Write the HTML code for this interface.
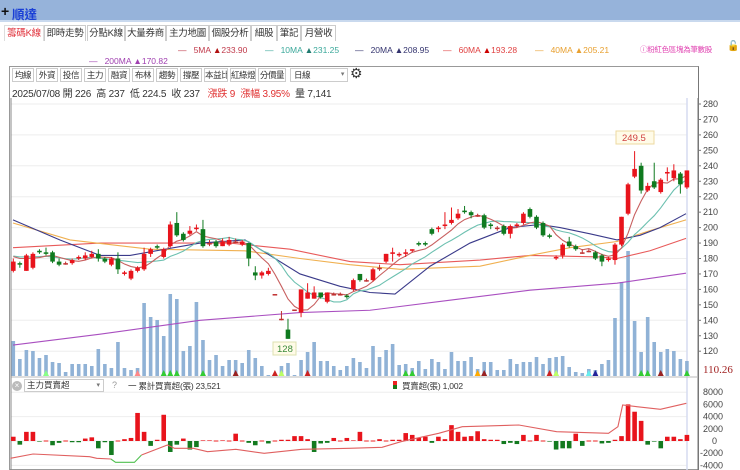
<!DOCTYPE html>
<html><head><meta charset="utf-8">
<style>
*{margin:0;padding:0;box-sizing:border-box}
body{width:740px;height:470px;overflow:hidden;background:#fff;font-family:"Liberation Sans","Noto Sans CJK TC",sans-serif;position:relative;color:#333}
.abs{position:absolute;white-space:nowrap}
#title{left:0;top:0;width:740px;height:22px;background:#96b3da;border-bottom:2px solid #c9d9ee}
.tab{position:absolute;top:25px;height:16px;border:1px solid #ccc;border-bottom:none;font-size:9.5px;line-height:15px;text-align:center;background:#fff;color:#333;white-space:nowrap;overflow:hidden;letter-spacing:-0.3px}
.leg{font-size:8.5px;top:45px}
.tb{position:absolute;top:68px;height:14px;border:1px solid #ccc;font-size:8.5px;line-height:12px;text-align:center;background:#fff;white-space:nowrap;overflow:hidden;letter-spacing:-0.4px}
</style></head><body>
<div id="title" class="abs"></div>
<div class="abs" style="left:1px;top:3px;font-size:14px;font-weight:bold;color:#111">+</div>
<div class="abs" style="left:12px;top:4px;font-size:12.5px;font-weight:bold;color:#1a3fd6">順達</div>

<div class="tab" style="left:4px;width:40px;color:#e0303a;border-color:#ddd">籌碼K線</div>
<div class="tab" style="left:44px;width:42px">即時走勢</div>
<div class="tab" style="left:87px;width:38px">分點K線</div>
<div class="tab" style="left:125px;width:41px">大量券商</div>
<div class="tab" style="left:166px;width:43px">主力地圖</div>
<div class="tab" style="left:209px;width:42px">個股分析</div>
<div class="tab" style="left:251px;width:26px">細股</div>
<div class="tab" style="left:277px;width:24px">筆記</div>
<div class="tab" style="left:301px;width:35px">月營收</div>

<div class="abs leg" style="left:178px;color:#c0394a">—&nbsp;&nbsp;&nbsp;5MA <span style="color:#b01010">▲</span>233.90</div>
<div class="abs leg" style="left:265px;color:#3aa89a">—&nbsp;&nbsp;&nbsp;10MA <span style="color:#207a70">▲</span>231.25</div>
<div class="abs leg" style="left:355px;color:#33336e">—&nbsp;&nbsp;&nbsp;20MA <span>▲</span>208.95</div>
<div class="abs leg" style="left:443px;color:#e04040">—&nbsp;&nbsp;&nbsp;60MA <span style="color:#c00">▲</span>193.28</div>
<div class="abs leg" style="left:535px;color:#e8a030">—&nbsp;&nbsp;&nbsp;40MA <span>▲</span>205.21</div>
<div class="abs leg" style="left:640px;top:44px;color:#e040b0;font-size:7.5px;letter-spacing:-0.3px">ⓘ粉紅色區塊為筆數股</div>
<div class="abs" style="left:727px;top:41px;font-size:10px;color:#000">🔓</div>
<div class="abs leg" style="left:89px;top:56px;color:#a040b0">—&nbsp;&nbsp;&nbsp;200MA <span>▲</span>170.82</div>

<div class="abs" style="left:9px;top:66px;width:690px;height:404px;border:1px solid #999;border-right:1px solid #777"></div>
<div class="tb" style="left:12px;width:22px">均線</div>
<div class="tb" style="left:36px;width:22px">外資</div>
<div class="tb" style="left:60px;width:22px">投信</div>
<div class="tb" style="left:84px;width:22px">主力</div>
<div class="tb" style="left:108px;width:22px">融資</div>
<div class="tb" style="left:132px;width:22px">布林</div>
<div class="tb" style="left:156px;width:22px">趨勢</div>
<div class="tb" style="left:180px;width:22px">撐壓</div>
<div class="tb" style="left:204px;width:24px">本益比</div>
<div class="tb" style="left:230px;width:26px">紅綠燈</div>
<div class="tb" style="left:258px;width:28px">分價量</div>
<div class="tb" style="left:290px;width:58px;text-align:left;padding-left:3px">日線<span style="position:absolute;right:3px;font-size:7px;color:#777">▾</span></div>
<div class="abs" style="left:350px;top:65px;font-size:14px;color:#333">⚙</div>
<div class="abs" style="left:12px;top:85px;font-size:10px;letter-spacing:-0.2px;color:#333">2025/07/08 開 226 &nbsp;高 237 &nbsp;低 224.5 &nbsp;收 237 &nbsp;&nbsp;<span style="color:#e03030">漲跌 9 &nbsp;漲幅 3.95%</span> &nbsp;量 7,141</div>

<svg id="c" class="abs" style="left:0;top:0" width="740" height="470"></svg>

<div class="abs" style="left:12px;top:381px;width:10px;height:10px;border-radius:5px;background:#bbb;color:#fff;font-size:8px;line-height:10px;text-align:center">×</div>
<div class="abs" style="left:24px;top:379px;width:80px;height:13px;border:1px solid #ccc;font-size:8.5px;line-height:11px;padding-left:2px">主力買賣超<span style="position:absolute;right:3px;font-size:7px;color:#777">▾</span></div>
<div class="abs" style="left:112px;top:380px;font-size:9px;color:#999">?</div>
<div class="abs" style="left:128px;top:380px;font-size:8.5px;letter-spacing:-0.2px;color:#333">一 累計買賣超(張) 23,521</div>
<div class="abs" style="left:393px;top:381px;width:4px;height:8px;background:linear-gradient(#e22 50%,#1a7a1a 50%)"></div>
<div class="abs" style="left:402px;top:380px;font-size:8.5px;letter-spacing:-0.2px;color:#333">買賣超(張) 1,002</div>

<script>
var s='';
function Y(p){return 104+(280-p)*1.545}
function X(i){return 13.3+6.54*i}
for(var p=120;p<=280;p+=20){s+='<line x1="11" x2="687" y1="'+Y(p)+'" y2="'+Y(p)+'" stroke="#eee"/>'}
for(var v=-4000;v<=8000;v+=4000){var yy=441-v*0.0061;s+='<line x1="11" x2="687" y1="'+yy+'" y2="'+yy+'" stroke="#eee"/>'}
s+='<line x1="687" x2="687" y1="98" y2="470" stroke="#d5dcf0" stroke-width="1.5"/>';
s+='<line x1="698" x2="698" y1="98" y2="470" stroke="#777"/>';
s+='<line x1="11" x2="698" y1="377" y2="377" stroke="#bbb"/>';
s+='<line x1="11" x2="11" y1="98" y2="470" stroke="#888"/>';
for(var p=120;p<=280;p+=10){s+='<text x="703" y="'+(Y(p)+3)+'" font-size="9" fill="#444" font-family="Liberation Sans">'+p+'</text><line x1="698" x2="701" y1="'+Y(p)+'" y2="'+Y(p)+'" stroke="#777"/>'}
s+='<text x="703" y="373" font-size="11" fill="#a02020" font-family="Liberation Serif">110.26</text>';
[[8000],[6000],[4000],[2000],[0],[-2000],[-4000]].forEach(function(a){var yy=441-a[0]*0.0061;s+='<text x="'+(a[0]<0?700:(a[0]==0?712:703))+'" y="'+(yy+3)+'" font-size="9" fill="#444" font-family="Liberation Sans">'+a[0]+'</text>'});
var vt=[341,359,350,351,358,355,362,363,372,364,364,364,366,349,364,368,342,368,370,368,303,317,320,336,294,299,351,346,302,340,360,355,366,360,360,363,350,358,366,375,375,366,363,375,360,352,342,361,361,366,370,366,358,362,368,346,357,350,344,365,364,368,361,369,359,362,369,352,361,361,357,369,362,362,370,370,359,364,362,362,357,364,358,357,356,367,372,373,369,370,364,360,318,282,251,321,352,317,342,352,349,351,359,361];
for(var i=0;i<vt.length;i++){s+='<rect x="'+(X(i)-1.8)+'" y="'+vt[i]+'" width="3.6" height="'+(376-vt[i])+'" fill="#90b2d6"/>'}
[[5,'#8f8'],[19,'#f88'],[23,'#3c3'],[24,'#3c3'],[25,'#3c3'],[29,'#3c3'],[34,'#922'],[40,'#c22'],[41,'#bf6'],[45,'#c22'],[60,'#3c3'],[61,'#3c3'],[71,'#fa0'],[72,'#922'],[82,'#c22'],[83,'#bf6'],[88,'#6ee'],[89,'#229'],[96,'#3c3'],[97,'#3c3'],[99,'#922'],[103,'#3c3']].forEach(function(m){var x=X(m[0]);s+='<polygon points="'+(x-3)+',376 '+(x+3)+',376 '+x+',370" fill="'+m[1]+'"/>'});
function pl(pts,c){var d=pts.map(function(a){return a[0]+','+Y(a[1])}).join(' ');s+='<polyline points="'+d+'" fill="none" stroke="'+c+'" stroke-width="1.1"/>'}
pl([[13,124],[100,131],[200,140],[300,145],[370,146.5],[450,153],[530,159.5],[617,164],[686,170.5]],'#a94fc0');
pl([[13,187],[100,190],[230,190],[290,186],[350,178],[400,176],[480,179],[530,182],[600,181],[617,180],[650,185],[686,193]],'#e85a5a');
pl([[13,203],[70,192],[150,186],[245,185],[300,180],[350,176],[400,173],[480,175],[530,182],[570,187],[617,191],[650,198],[686,205]],'#f0b050');
pl([[13,205],[60,192],[100,182],[130,182],[200,190],[245,192],[300,170],[340,162],[370,158],[395,157],[430,175],[470,190],[510,200],[540,202],[560,200],[590,196],[617,192],[640,195],[660,200],[686,209]],'#3a3a8a');
var d=[[172,178,180,171],[177,176,178,174],[172,182,183,172],[174,183,184,173],[185,184,186,183],[184,183,187,182],[184,178,185,177],[178,176,180,175],[177,177,178,176],[177,179,180,176],[180,181,182,179],[180,182,184,179],[181,183,185,180],[183,180,186,178],[180,178,181,177],[176,180,181,175],[180,173,184,170],[170,171,172,169],[167,172,173,166],[172,174,175,171],[173,183,187,172],[183,186,187,181],[188,187,189,186],[181,186,187,180],[188,202,204,187],[203,195,210,194],[196,192,197,191],[196,198,201,195],[199,200,202,198],[199,188,205,187],[190,190,192,188],[191,188,192,187],[188,191,193,188],[189,192,194,188],[191,191,193,190],[189,191,192,188],[190,180,190,175],[171,169,175,166],[169,171,172,167],[170,172,174,169],[157,157,157,157],[141,141,146,140],[134,128,141,128],[147,147,147,147],[145,160,160,142],[154,158,164,154],[154,158,162,154],[158,155,158,154],[152,158,158,151],[157,157,158,156],[157,157,158,156],[156,155,157,154],[160,166,167,159],[170,166,170,165],[166,166,167,165],[166,173,174,165],[174,174,176,172],[178,183,183,177],[183,184,187,178],[182,183,184,181],[183,184,186,181],[185,186,186,184],[190,189,191,188],[190,189,191,188],[199,196,200,195],[199,200,201,197],[201,202,210,199],[203,205,213,202],[206,209,212,205],[211,210,214,209],[210,208,211,206],[208,208,209,207],[208,200,209,199],[202,201,203,199],[200,200,201,198],[201,196,202,195],[196,201,202,193],[201,202,203,200],[203,209,210,202],[212,207,213,206],[207,200,208,199],[203,195,204,194],[195,194,196,193],[180,181,182,179],[182,189,190,180],[191,188,194,187],[188,186,189,185],[184,184,186,183],[185,185,186,184],[184,180,185,179],[182,178,183,175],[179,180,181,178],[179,189,190,176],[189,207,207,188],[209,228,229,208],[233,238,249.5,232],[240,224,242,222],[224,227,229,223],[230,226,242,225],[223,231,232,222],[235,236,239,230],[232,237,241,230],[235,228,236,222],[226,237,237,225]];
function ma(n){var r=[];for(var i=0;i<d.length;i++){var t=0;for(var k=i-n+1;k<=i;k++){t+=k<0?182:d[k][1]}r.push([X(i),t/n])}return r}
pl(ma(10),'#6cc0b0');
pl(ma(5),'#c86060');
for(var i=0;i<d.length;i++){var o=d[i][0],c=d[i][1],h=d[i][2],l=d[i][3],x=X(i);var col=c>o?'#e8141c':(c<o?'#0f7a1f':'#c03030');
s+='<line x1="'+x+'" x2="'+x+'" y1="'+Y(h)+'" y2="'+Y(l)+'" stroke="'+col+'"/>';
var t=Y(Math.max(o,c)),b=Y(Math.min(o,c));s+='<rect x="'+(x-2.3)+'" y="'+t+'" width="4.6" height="'+Math.max(1.5,b-t)+'" fill="'+col+'"/>'}
s+='<rect x="616" y="131" width="38" height="13" fill="#fffbe8" stroke="#ecd9a0"/><text x="622" y="141" font-size="9.5" fill="#d04040" font-family="Liberation Sans">249.5</text>';
s+='<rect x="273" y="342" width="23" height="13" fill="#fffbe8" stroke="#dde0b0"/><text x="277" y="352" font-size="9.5" fill="#3a8a3a" font-family="Liberation Sans">128</text>';
var bv=[0.7,-0.6,1.5,1.5,-0.1,0,-0.7,-0.3,0,-0.2,-0.2,0.4,0.6,-1.2,-0.2,-2.3,0,0.3,0.5,4.6,1.5,-0.8,0.2,4.3,-1.8,-0.6,0.4,-1.4,-1,0.1,0.1,0,0.1,0,1.2,0,-0.3,-0.7,0,-0.4,0,0.2,0.2,0.8,0.8,0.3,-1.8,-0.4,-0.3,0.5,0,0.5,0.1,1.5,0,0,0.3,0,0.2,0.2,1.3,1,0.5,0.7,-0.3,0.7,0.3,2.6,1.5,0.7,0.8,1.6,0.3,0.2,0.2,-0.5,-0.3,-0.5,1,0,1,0,-0.1,-1.4,-1.2,-1.2,1.2,-0.8,0,0,-0.4,-0.3,0.2,0.8,6,4.8,3.3,-0.6,-0.1,-1.2,0.7,0.7,0.3,1];
for(var i=0;i<bv.length;i++){var v=bv[i]*1000*0.0061;var x=X(i);if(Math.abs(v)<0.6){s+='<rect x="'+(x-2.3)+'" y="440.5" width="4.6" height="1" fill="'+(v>=0?'#e22':'#1a7a1a')+'"/>';continue}
s+='<rect x="'+(x-2.3)+'" y="'+(v>0?441-v:441)+'" width="4.6" height="'+Math.abs(v)+'" fill="'+(v>0?'#e8141c':'#137a1f')+'"/>'}
var cl=[[22,295],[70,282],[190,290],[205,295],[235,297]],cg=[[235,297],[245,307],[285,307],[300,285]],cr=[[300,285],[355,255],[370,265],[410,265],[440,275],[500,268],[560,280],[640,268],[740,265],[810,262],[850,245],[930,220],[980,200],[1100,195],[1180,215],[1290,220],[1310,200],[1320,135],[1350,140],[1400,148],[1455,130]];
function bl(a,c){s+='<polyline points="'+a.map(function(p){return (p[0]/2.12)+','+(360+p[1]/3)}).join(' ')+'" fill="none" stroke="'+c+'" stroke-width="1.1"/>'}
bl(cl,'#e06060');bl(cg,'#50c050');bl(cr,'#e06060');
document.getElementById('c').innerHTML=s;
</script>
</body></html>
